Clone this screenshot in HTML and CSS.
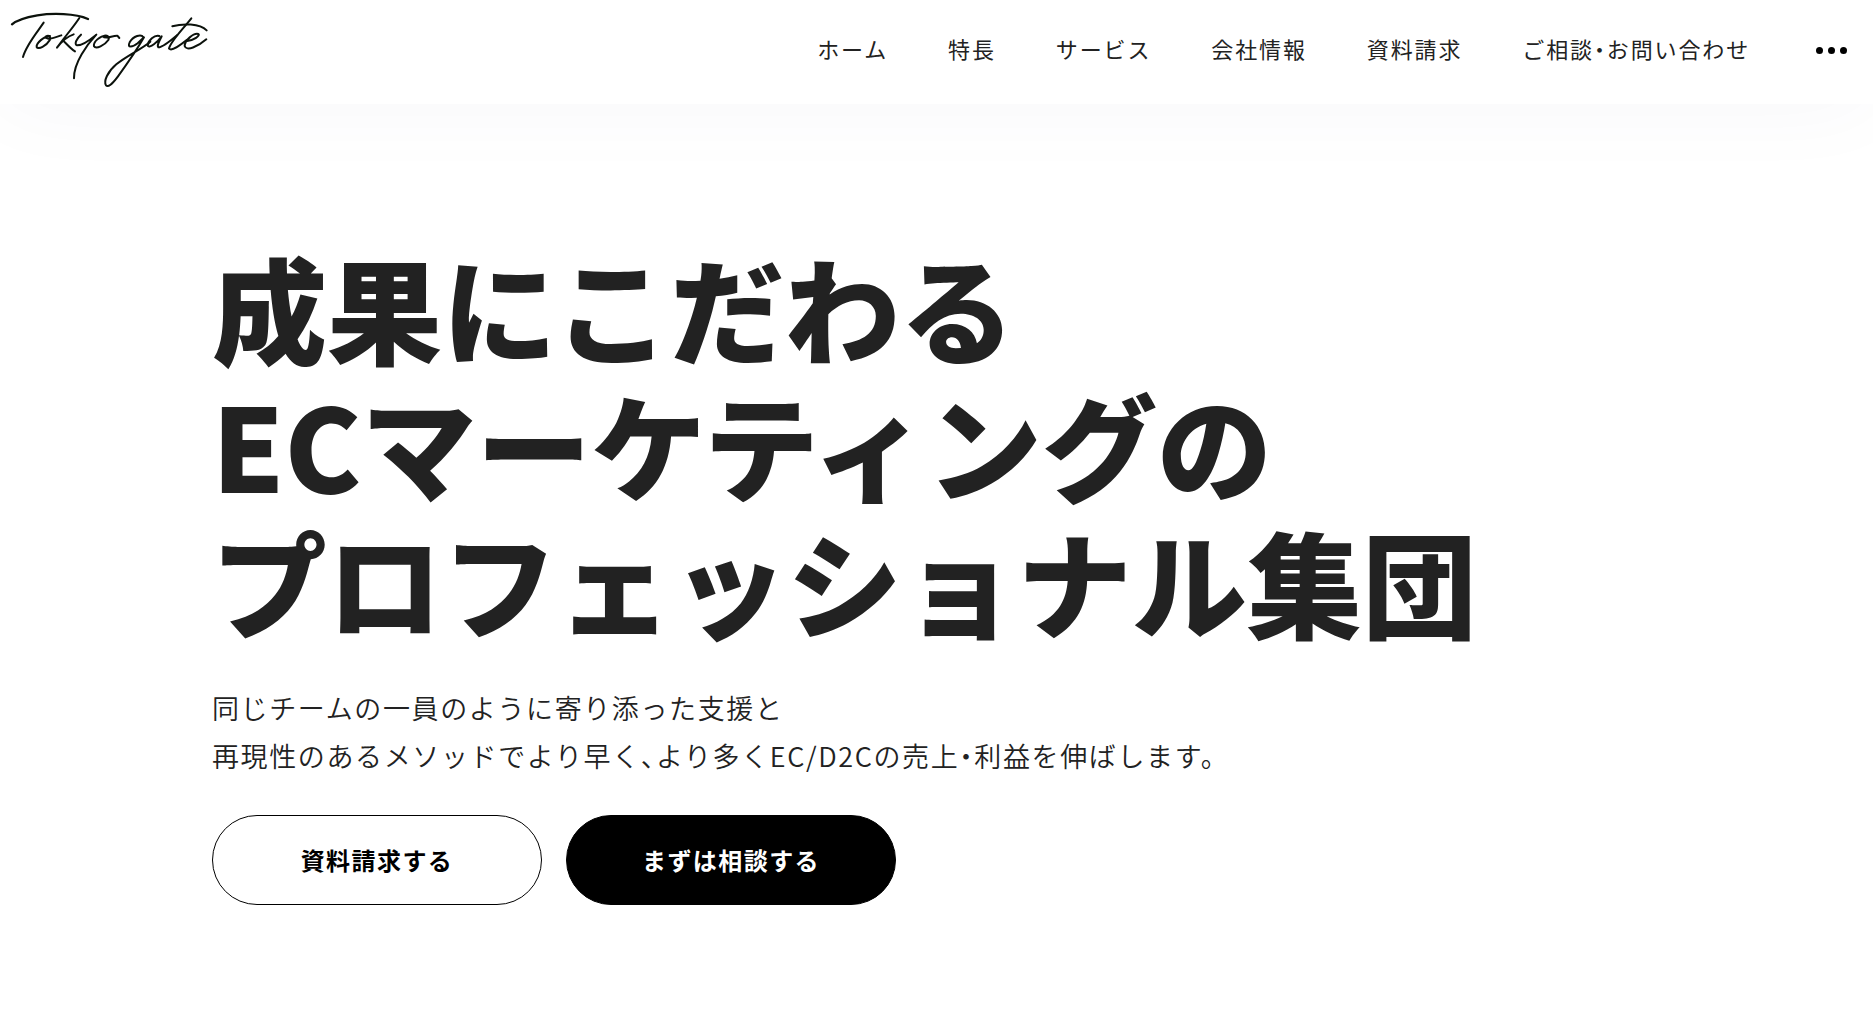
FILE: index.html
```html
<!DOCTYPE html>
<html lang="ja">
<head>
<meta charset="utf-8">
<meta name="viewport" content="width=device-width, initial-scale=1">
<title>Tokyo gate</title>
<link rel="stylesheet" href="styles.css">
</head>
<body>
<header class="header">
  <a class="logo" href="#" aria-label="Tokyo gate">
    <svg class="logo-mark" viewBox="0 0 660 312" fill="none" stroke="#0c120c" stroke-width="6" stroke-linecap="round" stroke-linejoin="round" aria-hidden="true">
      <path stroke-width="7" d="M36 73C48 62 78 52 112 46C158 39 226 40 264 57"/>
      <path d="M131 68C112 96 78 136 69 171"/>
      <path d="M150 108C132 108 108 130 110 141C114 150 140 137 149 121C154 111 147 104 137 110C141 122 160 114 184 106"/>
      <path d="M238 54C220 82 188 118 171 143C184 126 202 109 221 103M190 122C200 132 212 146 225 154"/>
      <path d="M243 104C229 116 222 133 231 136C246 137 272 118 289 104C262 133 221 188 222 235"/>
      <path d="M318 107C300 107 279 126 282 139C288 149 314 136 325 120C330 109 320 103 309 109C317 120 337 106 352 107L358 114"/>
      <path d="M430 112C424 101 400 107 389 127C380 145 398 142 413 130L432 112C416 140 384 188 354 229C336 253 324 263 318 256C310 243 323 215 349 193C378 168 421 150 451 125"/>
      <path d="M478 108C464 103 444 122 443 137C448 147 474 125 485 109C477 124 470 137 475 142C485 143 512 122 532 105"/>
      <path d="M574 55C548 88 510 126 507 146C516 155 540 136 560 120"/>
      <path d="M517 79C548 70 599 70 620 91"/>
      <path d="M558 124C582 121 602 106 595 102C581 98 554 121 554 138C559 155 594 140 619 118"/>
    </svg>
  </a>
  <nav class="nav">
    <a href="#">ホーム</a>
    <a href="#">特長</a>
    <a href="#">サービス</a>
    <a href="#">会社情報</a>
    <a href="#">資料請求</a>
    <a href="#">ご相談・お問い合わせ</a>
    <button class="more" type="button" aria-label="メニュー"><i></i><i></i><i></i></button>
  </nav>
</header>
<main class="hero">
  <h1 class="title">成果にこだわる<br>ECマーケティングの<br>プロフェッショナル集団</h1>
  <p class="lead">同じチームの一員のように寄り添った支援と<br>再現性のあるメソッドでより早く、より多くEC/D2Cの売上・利益を伸ばします。</p>
  <div class="actions">
    <button class="btn" type="button">資料請求する</button>
    <button class="btn btn-dark" type="button">まずは相談する</button>
  </div>
</main>
</body>
</html>
```
FILE: styles.css
```css
* { box-sizing: border-box; }
body {
  margin: 0;
  background: #fff;
  color: #222;
  font-family: "Noto Sans CJK JP", sans-serif;
  font-feature-settings: "halt";
}
.header {
  display: flex;
  justify-content: space-between;
  align-items: flex-start;
  height: 104px;
  padding-right: 24px;
  background: #fff;
  box-shadow: 0 0 90px rgba(20, 40, 90, 0.04);
}
.logo { display: block; }
.logo-mark { display: block; width: 220px; height: 104px; }
.nav {
  display: flex;
  align-items: center;
  gap: 60px;
  margin-top: 32px;
  font-size: 22px;
  line-height: 32px;
  letter-spacing: 0.085em;
}
.nav a {
  padding-bottom: 4px;
  color: inherit;
  text-decoration: none;
  white-space: nowrap;
}
.more {
  display: flex;
  gap: 5px;
  margin-left: 4px;
  padding: 8px 2px;
  border: 0;
  background: none;
}
.more i { width: 7px; height: 7px; border-radius: 50%; background: #000; }
.hero { padding: 134px 212px 80px; }
.title {
  margin: 0;
  font-size: 115px;
  line-height: 137px;
  font-weight: 900;
}
.lead {
  margin: 35px 0;
  font-size: 27px;
  line-height: 48px;
  font-weight: 350;
  letter-spacing: 0.06em;
}
.actions { display: flex; flex-wrap: wrap; gap: 24px; }
.btn {
  width: 330px;
  height: 90px;
  padding: 0 0 2px;
  border: 1px solid #000;
  border-radius: 45px;
  background: #fff;
  color: #000;
  font: inherit;
  font-size: 24px;
  font-weight: 700;
  letter-spacing: 0.06em;
}
.btn-dark { background: #000; color: #fff; }
```
